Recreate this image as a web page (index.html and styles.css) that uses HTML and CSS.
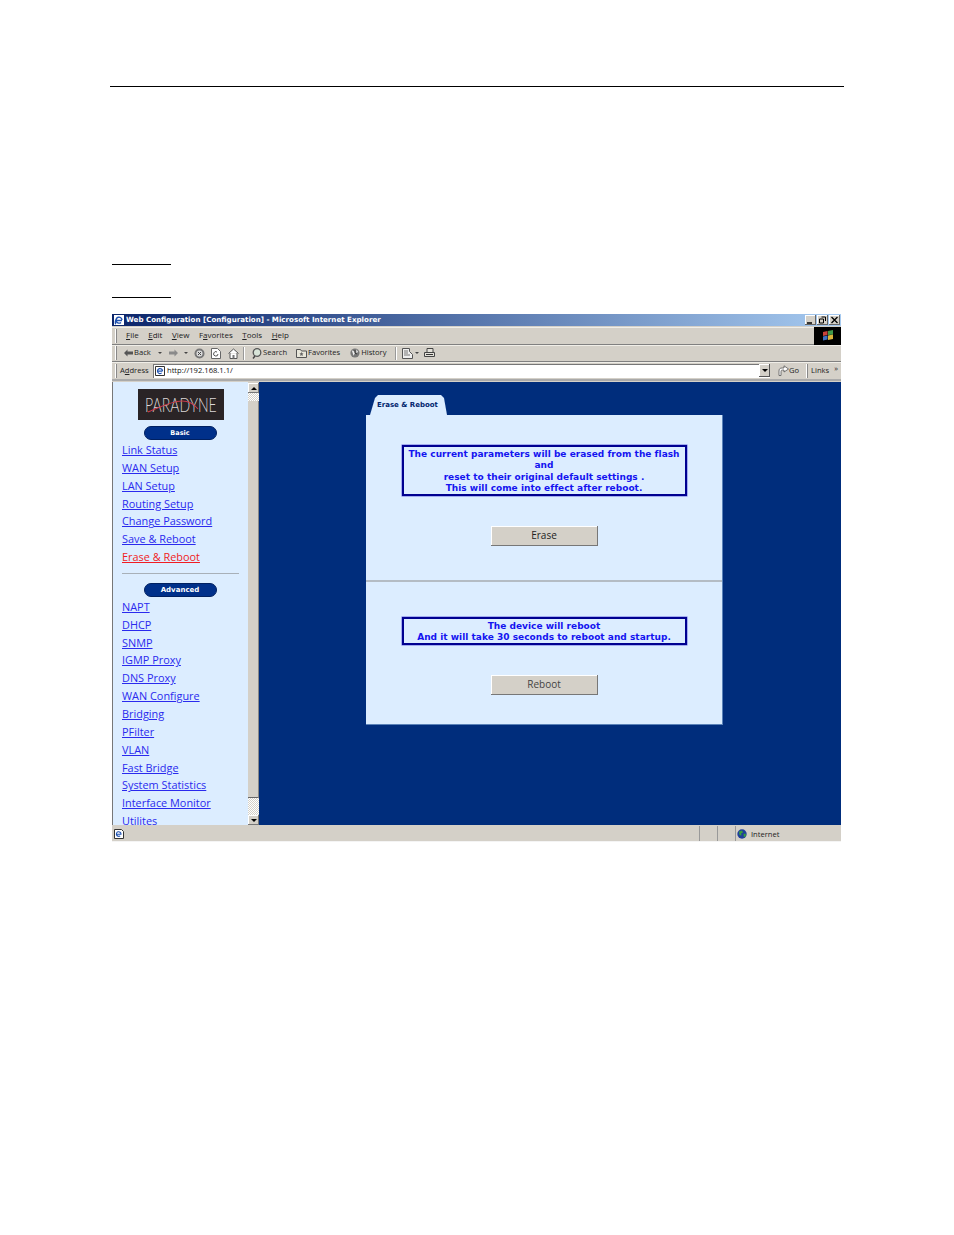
FILE: index.html
```html
<!DOCTYPE html>
<html lang="en">
<head>
    <meta charset="UTF-8">
    <title>Web Configuration</title>
    <link rel="stylesheet" href="styles.css">
</head>
<body>
    <div class="page-rule"></div>
    <div class="blank-line first"></div>
    <div class="blank-line second"></div>

    <div class="window">
        <!-- Title bar -->
        <div class="titlebar">
            <svg class="ie-icon" width="10" height="10" viewBox="0 0 10 10"><rect width="10" height="10" fill="#fff"/><path d="M2 5.500h6M8 5a3 3 0 1 0-1 2.400M2.600 3.500C1 6 1 8.500 2 9" fill="none" stroke="#1c50b0" stroke-width="1.400"/></svg>
            <span class="title-text">Web Configuration [Configuration] - Microsoft Internet Explorer</span>
            <div class="win-buttons">
                <span class="win-btn"><svg width="9" height="8" viewBox="0 0 9 8"><path d="M1 7h5" stroke="#000" stroke-width="1.500"/></svg></span>
                <span class="win-btn"><svg width="9" height="8" viewBox="0 0 9 8"><path d="M3.500 1h4v4M1.500 3h4v4h-4z" fill="none" stroke="#000"/></svg></span>
                <span class="win-btn"><svg width="9" height="8" viewBox="0 0 9 8"><path d="M1.500 1l6 6M7.500 1l-6 6" stroke="#000" stroke-width="1.300"/></svg></span>
            </div>
        </div>

        <!-- Menu bar -->
        <div class="menubar">
            <div class="handle"></div>
            <span class="menu-item file"><u>F</u>ile</span>
            <span class="menu-item"><u>E</u>dit</span>
            <span class="menu-item"><u>V</u>iew</span>
            <span class="menu-item">F<u>a</u>vorites</span>
            <span class="menu-item"><u>T</u>ools</span>
            <span class="menu-item"><u>H</u>elp</span>
            <div class="flag-box">
                <svg width="12" height="11" viewBox="0 0 12 11"><path d="M1 2l4.500-1v4L1 6z" fill="#c8423a"/><path d="M6 1l5-1v4.500L6 5z" fill="#3f9a4a"/><path d="M1 6.500L5.500 5.500v4L1 10.500z" fill="#3c6fc0"/><path d="M6 5.500l5-1V9l-5 1z" fill="#d9b43a"/></svg>
            </div>
        </div>

        <!-- Standard buttons -->
        <div class="toolbar">
            <div class="handle"></div>
            <svg class="tool back-arrow" width="10" height="8" viewBox="0 0 10 8"><path d="M4.500.5L1 4l3.500 3.500V5.500H10v-3H4.500z" fill="#555"/></svg>
            <span class="tool-label back-label">Back</span>
            <span class="caret back-caret"></span>
            <svg class="tool forward-arrow" width="10" height="8" viewBox="0 0 10 8"><path d="M5.500.5L9 4 5.500 7.500V5.500H0v-3h5.500z" fill="#8a8a8a"/></svg>
            <span class="caret forward-caret"></span>
            <svg class="tool stop" width="11" height="11" viewBox="0 0 11 11"><circle cx="5.500" cy="5.500" r="5" fill="#777"/><circle cx="5.500" cy="5.500" r="3" fill="#ddd"/><path d="M4 4l3 3M7 4l-3 3" stroke="#444"/></svg>
            <svg class="tool refresh" width="10" height="11" viewBox="0 0 10 11"><path d="M.5.500h6l3 3v7H.5z" fill="#fff" stroke="#666"/><path d="M7 6a2.200 2.200 0 1 1-1-2" fill="none" stroke="#555"/></svg>
            <svg class="tool home" width="11" height="11" viewBox="0 0 11 11"><path d="M.5 5.500L5.500 1l5 4.500M2 5v5.500h7V5" fill="#fff" stroke="#555"/><rect x="4.500" y="7" width="2" height="3.500" fill="#777"/></svg>
            <div class="tool-sep sep-one"></div>
            <svg class="tool search" width="10" height="11" viewBox="0 0 10 11"><circle cx="5" cy="4.500" r="3.800" fill="#d8e4d8" stroke="#555" stroke-width="1.300"/><path d="M3 8l-2 2.500" stroke="#444" stroke-width="1.500"/></svg>
            <span class="tool-label">Search</span>
            <svg class="tool favorites" width="11" height="10" viewBox="0 0 11 10"><path d="M.5 1.500h4l1 1.500h5v6.500H.5z" fill="#e8e6da" stroke="#555"/><path d="M5.500 4l.7 1.300 1.300.2-1 1 .3 1.400-1.300-.7-1.300.7.3-1.400-1-1 1.300-.2z" fill="#666"/></svg>
            <span class="tool-label">Favorites</span>
            <svg class="tool history" width="11" height="12" viewBox="0 0 12 12"><circle cx="6.500" cy="6" r="5" fill="#777"/><path d="M3 3l4 2-2 4zM8 2l2 3-2 1z" fill="#eee"/><path d="M6.500 3v3l2 1" stroke="#222" fill="none"/></svg>
            <span class="tool-label">History</span>
            <div class="tool-sep sep-two"></div>
            <svg class="tool mail" width="12" height="11" viewBox="0 0 12 11"><path d="M.5.500h7v3l3 3v4H.5z" fill="#eee" stroke="#555"/><path d="M2 3h4M2 5h4M2 7h6" stroke="#777"/></svg>
            <span class="caret mail-caret"></span>
            <svg class="tool print" width="11" height="10" viewBox="0 0 11 10"><path d="M3 .5h6v4H3zM.5 4.500h10v4H.5z" fill="#e4e2da" stroke="#444"/><path d="M2 6.500h7" stroke="#333"/></svg>
        </div>

        <!-- Address bar -->
        <div class="addressbar">
            <div class="handle"></div>
            <span class="address-label">A<u>d</u>dress</span>
            <div class="address-field">
                <svg class="page-icon" width="10" height="10" viewBox="0 0 10 10"><path d="M.5.500h9v9h-9z" fill="#fff" stroke="#333"/><path d="M2.500 5.200h5M7.500 5a2.500 2.500 0 1 0-.8 1.900" fill="none" stroke="#1c50b0" stroke-width="1.200"/></svg>
                <span class="url">http://192.168.1.1/</span>
                <span class="dropdown"><span class="caret dark"></span></span>
            </div>
            <svg class="go-arrow" width="11" height="11" viewBox="0 0 11 11"><path d="M1 10.500V6c0-2 1-3 3-3h2V.8L10.500 4 6 7V5H4.500C3.500 5 3 5.500 3 6.500v4z" fill="#fff" stroke="#555" stroke-width=".8"/></svg>
            <span class="go-label">Go</span>
            <div class="handle links-handle"></div>
            <span class="links-label">Links</span>
            <span class="chevron">&raquo;</span>
        </div>

        <!-- Page area -->
        <div class="content">
            <nav class="sidebar">
                <div class="logo">
                    <span class="logo-text">PARADYNE</span>
                    <svg class="logo-swoosh" width="60" height="16" viewBox="0 0 60 16"><path d="M0 15C12 10 24 4 34 4c6 0 12 3 16 8" fill="none" stroke="#c8384a" stroke-width="1.200"/></svg>
                </div>
                <div class="pill basic">Basic</div>
                <a class="nav-link first-link">Link Status</a>
                <a class="nav-link">WAN Setup</a>
                <a class="nav-link">LAN Setup</a>
                <a class="nav-link">Routing Setup</a>
                <a class="nav-link">Change Password</a>
                <a class="nav-link">Save &amp; Reboot</a>
                <a class="nav-link active">Erase &amp; Reboot</a>
                <div class="nav-divider"></div>
                <div class="pill">Advanced</div>
                <a class="nav-link first-link">NAPT</a>
                <a class="nav-link">DHCP</a>
                <a class="nav-link">SNMP</a>
                <a class="nav-link">IGMP Proxy</a>
                <a class="nav-link">DNS Proxy</a>
                <a class="nav-link">WAN Configure</a>
                <a class="nav-link">Bridging</a>
                <a class="nav-link">PFilter</a>
                <a class="nav-link">VLAN</a>
                <a class="nav-link">Fast Bridge</a>
                <a class="nav-link">System Statistics</a>
                <a class="nav-link">Interface Monitor</a>
                <a class="nav-link">Utilites</a>
            </nav>

            <div class="scrollbar">
                <span class="scroll-btn"><span class="arrow-up"></span></span>
                <span class="scroll-track top"></span>
                <span class="scroll-thumb"></span>
                <span class="scroll-track bottom"></span>
                <span class="scroll-btn"><span class="caret dark"></span></span>
            </div>

            <main class="main">
                <div class="tab">Erase &amp; Reboot</div>
                <div class="panel">
                    <section class="panel-section erase">
                        <div class="notice">
                            The current parameters will be erased from the flash<br>
                            and<br>
                            reset to their original default settings .<br>
                            This will come into effect after reboot.
                        </div>
                        <button class="action-btn" type="button">Erase</button>
                    </section>
                    <section class="panel-section reboot">
                        <div class="notice">
                            The device will reboot<br>
                            And it will take 30 seconds to reboot and startup.
                        </div>
                        <button class="action-btn muted" type="button">Reboot</button>
                    </section>
                </div>
            </main>
        </div>

        <!-- Status bar -->
        <div class="statusbar">
            <svg class="status-page" width="10" height="10" viewBox="0 0 10 10"><path d="M.5.500h7l2 2v7h-9z" fill="#fff" stroke="#333"/><path d="M2.500 5.200h5M7 5a2.300 2.300 0 1 0-.8 1.800" fill="none" stroke="#1c50b0" stroke-width="1.100"/></svg>
            <div class="status-cell empty"></div>
            <div class="status-cell empty"></div>
            <div class="status-cell zone">
                <svg width="10" height="10" viewBox="0 0 10 10"><circle cx="5" cy="5" r="4.700" fill="#1f3f9c"/><path d="M2 2.500l3-1 1 2-2 1 .5 2-2-.5zM6.500 5l2-.5.5 2-2 2z" fill="#38a03c"/></svg>
                <span>Internet</span>
            </div>
        </div>
    </div>
</body>
</html>
```

FILE: styles.css
```css
body {
    margin: 0;
    padding: 0;
    background-color: #fff;
    font-family: "DejaVu Sans", Verdana, sans-serif;
}
.page-rule {
    height: 1px;
    margin: 86px 110px 0;
    background-color: #000;
}
.blank-line {
    width: 59px;
    height: 1px;
    margin-left: 112px;
    background-color: #000;
}
.blank-line.first {
    margin-top: 177px;
}
.blank-line.second {
    margin-top: 32px;
}

/* browser window */
.window {
    width: 729px;
    height: 528px;
    margin: 16px 0 0 112px;
    display: flex;
    flex-direction: column;
    background-color: #d4d0c8;
    font-family: "Open Sans", "Liberation Sans", sans-serif;
    color: #222;
}
.titlebar {
    height: 12px;
    flex: none;
    display: flex;
    align-items: center;
    padding: 0 1px 0 2px;
    background: linear-gradient(to right, #0a246a, #a6caf0);
    color: #fff;
}
.title-text {
    margin: 0 0 2px 2px;
    font-family: "DejaVu Sans", sans-serif;
    font-size: 7.100px;
    font-weight: bold;
    white-space: nowrap;
}
.win-buttons {
    margin-left: auto;
    display: flex;
    gap: 1px;
}
.win-btn {
    width: 11px;
    height: 10px;
    display: flex;
    align-items: center;
    justify-content: center;
    background-color: #d4d0c8;
    box-shadow: inset -1px -1px #666, inset 1px 1px #fff;
}
.handle {
    width: 1px;
    height: 14px;
    flex: none;
    margin-left: 3px;
    background-color: #fff;
    border-right: 1px solid #888;
}
.menubar, .toolbar, .addressbar {
    flex: none;
    display: flex;
    align-items: center;
    font-size: 7.600px;
    white-space: nowrap;
    border-bottom: 1px solid #808080;
    box-shadow: inset 0 1px #f0eee8;
}
.menubar {
    height: 17px;
    margin-top: 1px;
    font-size: 8px;
}
.menu-item {
    margin: 0 0 2px 9.500px;
}
.menu-item.file {
    margin-left: 9px;
}
.flag-box {
    width: 27px;
    height: 18px;
    margin-left: auto;
    display: flex;
    align-items: center;
    justify-content: center;
    background-color: #000;
}
.toolbar {
    height: 16px;
}
.tool-label {
    margin: 0 0 2px 1px;
}
.back-arrow { margin-left: 6px; }
.back-label { margin-left: 1px; width: 20px; }
.back-caret { margin-left: 4px; }
.forward-arrow { margin-left: 7px; }
.forward-caret { margin-left: 5px; border-top-color: #999; }
.stop { margin-left: 6px; }
.refresh { margin-left: 6px; }
.home { margin-left: 7px; }
.sep-one { margin-left: 4px; }
.search { margin-left: 7px; }
.favorites { margin-left: 9px; }
.history { margin-left: 9px; }
.sep-two { margin-left: 8px; }
.mail { margin-left: 5px; }
.mail-caret { margin-left: 1px; }
.print { margin-left: 5px; }
.tool-sep {
    width: 1px;
    height: 13px;
    background-color: #999;
    border-right: 1px solid #fff;
}
.caret {
    width: 0;
    height: 0;
    display: inline-block;
    border-left: 2px solid transparent;
    border-right: 2px solid transparent;
    border-top: 2px solid #444;
}
.caret.dark {
    border-left-width: 3px;
    border-right-width: 3px;
    border-top: 3px solid #000;
}
.addressbar {
    height: 17px;
    border-bottom: 2px solid #aaa;
}
.address-label {
    width: 33px;
    margin: 0 0 2px 3px;
}
.address-field {
    width: 617px;
    height: 14px;
    display: flex;
    align-items: center;
    background-color: #fff;
    box-shadow: inset 1px 1px #777;
}
.page-icon {
    margin-left: 2px;
}
.url {
    margin: 0 0 2px 2px;
    color: #111;
}
.dropdown {
    width: 11px;
    height: 13px;
    margin-left: auto;
    display: flex;
    align-items: center;
    justify-content: center;
    background-color: #d4d0c8;
    box-shadow: inset -1px -1px #555, inset 1px 1px #fff;
}
.go-arrow {
    margin-left: 8px;
}
.go-label {
    width: 17px;
    margin: 0 0 2px 0;
}
.links-handle {
    margin-left: 0;
}
.links-label {
    margin: 0 0 2px 3px;
}
.chevron {
    margin: 0 0 5px 5px;
    font-size: 7.600px;
}

/* page area */
.content {
    flex: 1;
    min-height: 0;
    margin-top: 1px;
    display: flex;
    overflow: hidden;
    border-left: 1px solid #777;
}
.sidebar {
    width: 135px;
    flex: none;
    display: flex;
    flex-direction: column;
    overflow: hidden;
    background-color: #dcedff;
}
.logo {
    width: 86px;
    height: 31px;
    flex: none;
    position: relative;
    margin: 7px 0 0 25px;
    display: flex;
    align-items: center;
    justify-content: center;
    background-color: #2a2426;
}
.logo-text {
    font-family: "Lato", "Liberation Sans", sans-serif;
    font-size: 18px;
    font-weight: 300;
    color: #dcd8d8;
    transform: scale(.78, 1.050);
}
.logo-swoosh {
    position: absolute;
    left: 10px;
    top: 8px;
}
.pill {
    width: 73px;
    height: 14px;
    flex: none;
    margin: 0 0 0 31px;
    display: flex;
    align-items: center;
    justify-content: center;
    box-sizing: border-box;
    border-radius: 7px;
    background-color: #00308a;
    border: 1px solid #002060;
    color: #fff;
    font-family: "DejaVu Sans", sans-serif;
    font-size: 7px;
    font-weight: bold;
    padding-right: 1px;
}
.pill.basic {
    margin-top: 6px;
    font-size: 6.500px;
}
.nav-link {
    flex: none;
    height: 17.850px;
    margin-left: 9px;
    line-height: 17.850px;
    font-family: "Open Sans", sans-serif;
    font-size: 10.900px;
    color: #2a2aee;
    text-decoration: underline;
    white-space: nowrap;
}
.nav-link.first-link {
    margin-top: 1px;
}
.nav-link.active {
    color: #f01c24;
}
.nav-divider {
    height: 1px;
    flex: none;
    margin: 7px 9px 9px;
    background-color: #a8b0b8;
}
.scrollbar {
    width: 11px;
    flex: none;
    display: flex;
    flex-direction: column;
    padding-top: 1px;
    background-color: #d4d0c8;
}
.scroll-btn {
    height: 10px;
    flex: none;
    display: flex;
    align-items: center;
    justify-content: center;
    background-color: #d4d0c8;
    box-shadow: inset -1px -1px #777, inset 1px 1px #fff;
}
.arrow-up {
    width: 0;
    height: 0;
    border-left: 3px solid transparent;
    border-right: 3px solid transparent;
    border-bottom: 3px solid #000;
}
.scroll-track {
    flex: none;
    background-image: repeating-conic-gradient(#fff 0 25%, #d4d0c8 0 50%);
    background-size: 2px 2px;
}
.scroll-track.top {
    height: 8px;
}
.scroll-track.bottom {
    height: 17px;
}
.scroll-thumb {
    flex: 1;
    box-shadow: inset -1px 0 #888, inset 0 -1px #666;
}
.main {
    flex: 1;
    padding: 13px 0 0 107px;
    background-color: #002d7c;
}
.tab {
    width: 77px;
    height: 20px;
    margin-left: 4px;
    box-sizing: border-box;
    padding: 6px 0 0 7px;
    clip-path: polygon(0 100%, 5px 3px, 8px 0, 71px 0, 74px 3px, 77px 100%);
    background-color: #dcedff;
    color: #00246e;
    font-family: "DejaVu Sans", sans-serif;
    font-size: 7px;
    font-weight: bold;
    white-space: nowrap;
}
.panel {
    width: 357px;
    height: 310px;
    box-sizing: border-box;
    background-color: #dcedff;
    border-right: 1px solid #5a82b8;
    border-bottom: 1px solid #5a82b8;
}
.panel-section {
    display: flex;
    flex-direction: column;
    align-items: center;
    box-sizing: border-box;
}
.panel-section.erase {
    height: 167px;
    padding-top: 30px;
    border-bottom: 2px solid #b4bcc4;
}
.panel-section.reboot {
    padding-top: 35px;
}
.notice {
    width: 285px;
    box-sizing: border-box;
    padding-top: 2px;
    border: 2px solid #000090;
    box-shadow: 0 0 0 .5px #6a6ae0;
    color: #1414f0;
    font-family: "DejaVu Sans", sans-serif;
    font-size: 9px;
    letter-spacing: .02px;
    font-weight: bold;
    line-height: 11.300px;
    text-align: center;
}
.reboot .notice {
    height: 28px;
}
.action-btn {
    width: 107px;
    height: 20px;
    flex: none;
    margin-top: 30px;
    padding: 0 0 2px;
    border: none;
    background-color: #d4d0c8;
    box-shadow: inset -1px -1px #777, inset 1px 1px #fff;
    color: #222;
    font-family: "Open Sans", sans-serif;
    font-size: 10px;
}
.action-btn.muted {
    color: #444;
}

/* status bar */
.statusbar {
    height: 15px;
    flex: none;
    display: flex;
    align-items: center;
    margin-top: 1px;
    border-bottom: 1px solid #f4f4f4;
    font-size: 7.600px;
}
.status-page {
    margin-left: 2px;
    margin-right: auto;
}
.status-cell {
    height: 100%;
    box-sizing: border-box;
    border-left: 1px solid #999;
}
.status-cell.empty {
    width: 18px;
}
.status-cell.zone {
    width: 106px;
    display: flex;
    align-items: center;
    gap: 4px;
    padding-left: 1px;
}
```
